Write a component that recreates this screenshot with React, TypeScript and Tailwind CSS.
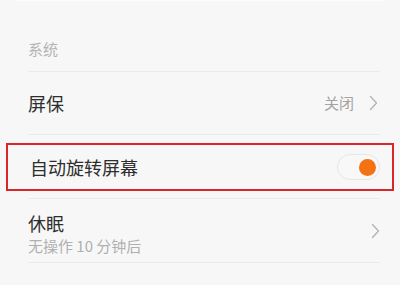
const font = { fontFamily: '"Noto Sans CJK SC", "Noto Sans", sans-serif' };

function Chevron() {
  return (
    <svg width="9" height="16" viewBox="0 0 9 16" fill="none" className="shrink-0">
      <path d="M1.5 1.5 L7.5 8 L1.5 14.5" stroke="#b5b5b5" strokeWidth="1.4" strokeLinecap="round" strokeLinejoin="round" />
    </svg>
  );
}

function Toggle() {
  return (
    <div className="w-[43px] h-[26px] rounded-full bg-[#f8f8f8] border border-[#e6e6e6] flex items-center justify-end pr-[3px]">
      <div className="w-[17px] h-[17px] rounded-full bg-[#f47214]" />
    </div>
  );
}

export default function App() {
  return (
    <div
      className="w-[400px] h-[285px] bg-[#f7f7f7] overflow-hidden flex flex-col"
      style={font}
    >
      <div className="mx-[15px] h-px bg-[#fdfdfd]" />

      {/* section header */}
      <div className="px-[28px] pt-[35px] h-[70px]">
        <span className="text-[15px] leading-[20px] text-[#b4b4b4]">系统</span>
      </div>
      <div className="ml-[28px] mr-[20px] h-px bg-[#ebebeb]" />

      {/* 屏保 */}
      <div className="h-[62px] pl-[28px] pr-[22px] flex items-center justify-between">
        <span className="text-[18px] text-[#2e2e2e] pt-[1px]">屏保</span>
        <div className="flex items-center gap-[15px]">
          <span className="text-[15px] text-[#a3a3a3]">关闭</span>
          <Chevron />
        </div>
      </div>
      <div className="ml-[28px] mr-[20px] h-px bg-[#ebebeb]" />

      {/* highlighted row */}
      <div className="mt-[8px] mx-[6px] h-[48px] border-2 border-[#d9262b] flex items-center justify-between pl-[22px] pr-[12px]">
        <span className="text-[18px] text-[#2e2e2e]">自动旋转屏幕</span>
        <Toggle />
      </div>
      <div className="mt-[7px] ml-[28px] mr-[20px] h-px bg-[#ebebeb]" />

      {/* 休眠 */}
      <div className="h-[63px] pl-[28px] pr-[20px] flex items-center justify-between">
        <div className="flex flex-col pt-[5px]">
          <span className="text-[18px] leading-[24px] text-[#2e2e2e]">休眠</span>
          <span className="text-[15px] leading-[21px] text-[#b0b0b0]">无操作 10 分钟后</span>
        </div>
        <Chevron />
      </div>
      <div className="ml-[28px] mr-[20px] h-px bg-[#ebebeb]" />
    </div>
  );
}
